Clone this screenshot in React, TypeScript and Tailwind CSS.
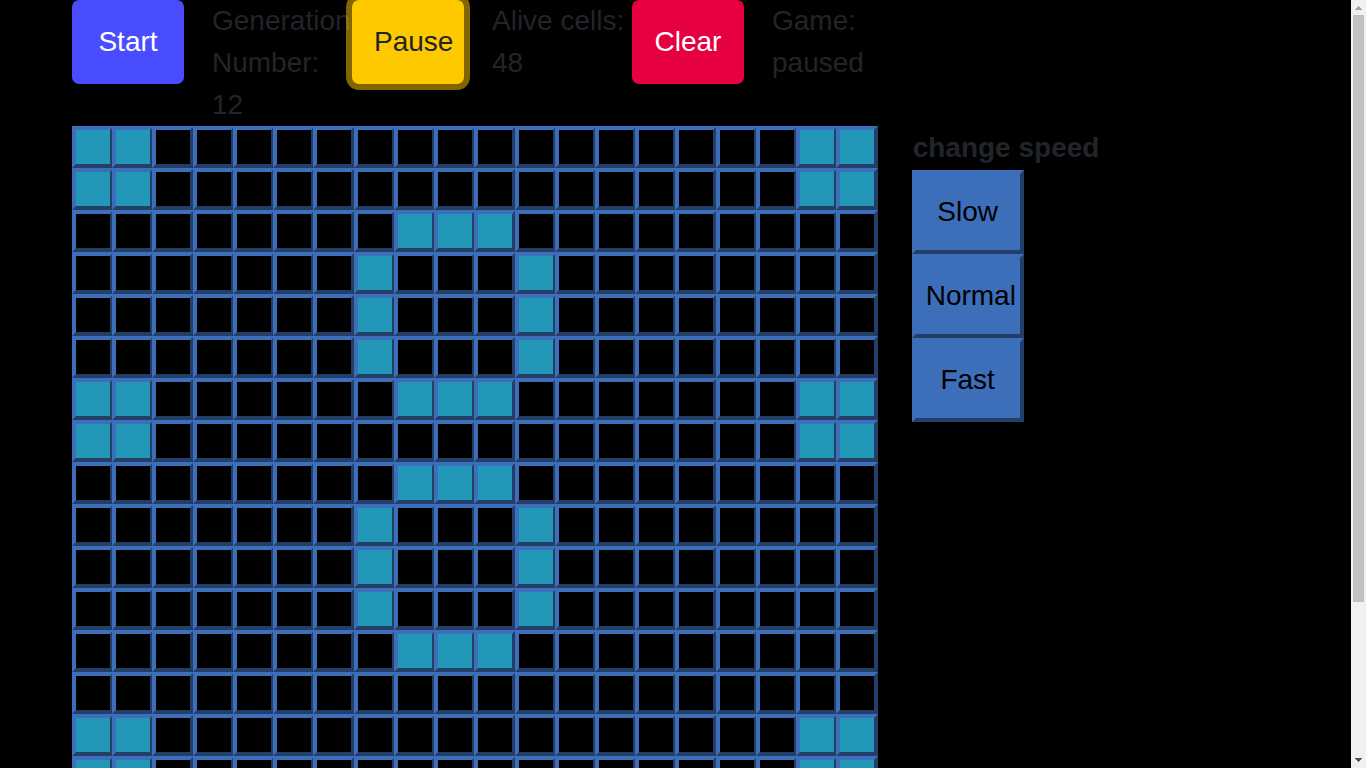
import { useEffect, useState } from "react";

const SIZE = 20;

const BLOCKS = "##................##";
const BAR = "........###.........";
const SIDES = ".......#...#........";
const EMPTY = "....................";

const START_ROWS = [
  BLOCKS, BLOCKS, BAR, SIDES, SIDES, SIDES,
  BLOCKS.slice(0, 8) + "###" + BLOCKS.slice(11), BLOCKS,
  BAR, SIDES, SIDES, SIDES, BAR, EMPTY,
  BLOCKS, BLOCKS, EMPTY, EMPTY, EMPTY, EMPTY,
];

const START_CELLS = START_ROWS.flatMap((row) => [...row].map((c) => c === "#"));

const SPEEDS = [
  { label: "Slow", delay: 1000 },
  { label: "Normal", delay: 500 },
  { label: "Fast", delay: 150 },
];

function nextGeneration(cells: boolean[]): boolean[] {
  return cells.map((alive, i) => {
    const x = i % SIZE;
    const y = Math.floor(i / SIZE);
    let count = 0;
    for (let dy = -1; dy <= 1; dy++) {
      for (let dx = -1; dx <= 1; dx++) {
        const nx = x + dx;
        const ny = y + dy;
        if ((dx || dy) && nx >= 0 && ny >= 0 && nx < SIZE && ny < SIZE && cells[ny * SIZE + nx]) count++;
      }
    }
    return count === 3 || (alive && count === 2);
  });
}

const BEVEL = "border-4 border-t-[#3d6eba] border-r-[#243f67] border-b-[#243f67] border-l-[#3d6eba]";

function Cell({ alive, label, onClick }: { alive: boolean; label: string; onClick: () => void }) {
  return (
    <button
      type="button"
      aria-label={label}
      aria-pressed={alive}
      onClick={onClick}
      className={`block h-[42px] w-[42px] ${BEVEL} ${alive ? "bg-[#2297b7]" : "bg-black"}`}
    />
  );
}

function ScrollTrack() {
  return (
    <div aria-hidden="true" className="flex w-[15px] shrink-0 flex-col items-center bg-[#f1f1f1]">
      <svg width="15" height="15" viewBox="0 0 15 15" shapeRendering="crispEdges">
        <path d="M7 6h1v1h1v1h1v1h1v1H4V9h1V8h1V7h1z" fill="#a3a3a3" />
      </svg>
      <div className="flex w-full flex-1 flex-col px-0.5">
        <div className="h-[79.5%] bg-[#c1c1c1]" />
      </div>
      <svg width="15" height="15" viewBox="0 0 15 15" shapeRendering="crispEdges">
        <path d="M4 5h7v1h-1v1H9v1H8v1H7V8H6V7H5V6H4z" fill="#505050" />
      </svg>
    </div>
  );
}

export default function App() {
  const [cells, setCells] = useState(START_CELLS);
  const [generation, setGeneration] = useState(12);
  const [running, setRunning] = useState(false);
  const [delay, setDelay] = useState(500);

  useEffect(() => {
    if (!running) return;
    const timer = setInterval(() => {
      setCells(nextGeneration);
      setGeneration((g) => g + 1);
    }, delay);
    return () => clearInterval(timer);
  }, [running, delay]);

  const toggle = (index: number) => setCells((old) => old.map((c, i) => (i === index ? !c : c)));

  const clear = () => {
    setCells(START_CELLS.map(() => false));
    setGeneration(0);
    setRunning(false);
  };

  const control = "relative block h-21 w-28 rounded-[7px] px-[22px]";

  return (
    <div className="flex h-screen bg-black font-['Liberation_Sans',Arial,sans-serif] text-[28px] leading-[42px] text-[#212529]">
      <main className="min-w-0 flex-1 overflow-y-auto px-18 [scrollbar-width:none]">
        <div className="grid grid-cols-[repeat(6,140px)] items-start">
          <button type="button" onClick={() => setRunning(true)} className={`${control} bg-[#4a4dff] text-white`}>
            Start
          </button>
          <p>Generation Number: {generation}</p>
          <button
            type="button"
            onClick={() => setRunning(false)}
            className={`${control} bg-[#ffc900] ${running ? "" : "shadow-[0_0_0_6px_rgba(255,201,0,0.5)]"}`}
          >
            Pause
          </button>
          <p>Alive cells: {cells.filter(Boolean).length}</p>
          <button type="button" onClick={clear} className={`${control} bg-[#e60040] text-white`}>
            Clear
          </button>
          <p>Game: {running ? "running" : "paused"}</p>
        </div>

        <div className="flex">
          <div className="grid w-2/3 grid-cols-[repeat(20,minmax(0,1fr))]">
            {cells.map((alive, i) => (
              <Cell
                key={i}
                alive={alive}
                label={`Row ${Math.floor(i / SIZE) + 1}, column ${(i % SIZE) + 1}`}
                onClick={() => toggle(i)}
              />
            ))}
          </div>
          <section className="pl-[35px]">
            <h2 className="px-px leading-11 font-bold">change speed</h2>
            {SPEEDS.map((speed) => (
              <button
                key={speed.label}
                type="button"
                onClick={() => setDelay(speed.delay)}
                className={`block h-21 w-28 bg-[#3d6eba] px-2.5 text-black ${BEVEL}`}
              >
                {speed.label}
              </button>
            ))}
          </section>
        </div>
      </main>
      <ScrollTrack />
    </div>
  );
}
